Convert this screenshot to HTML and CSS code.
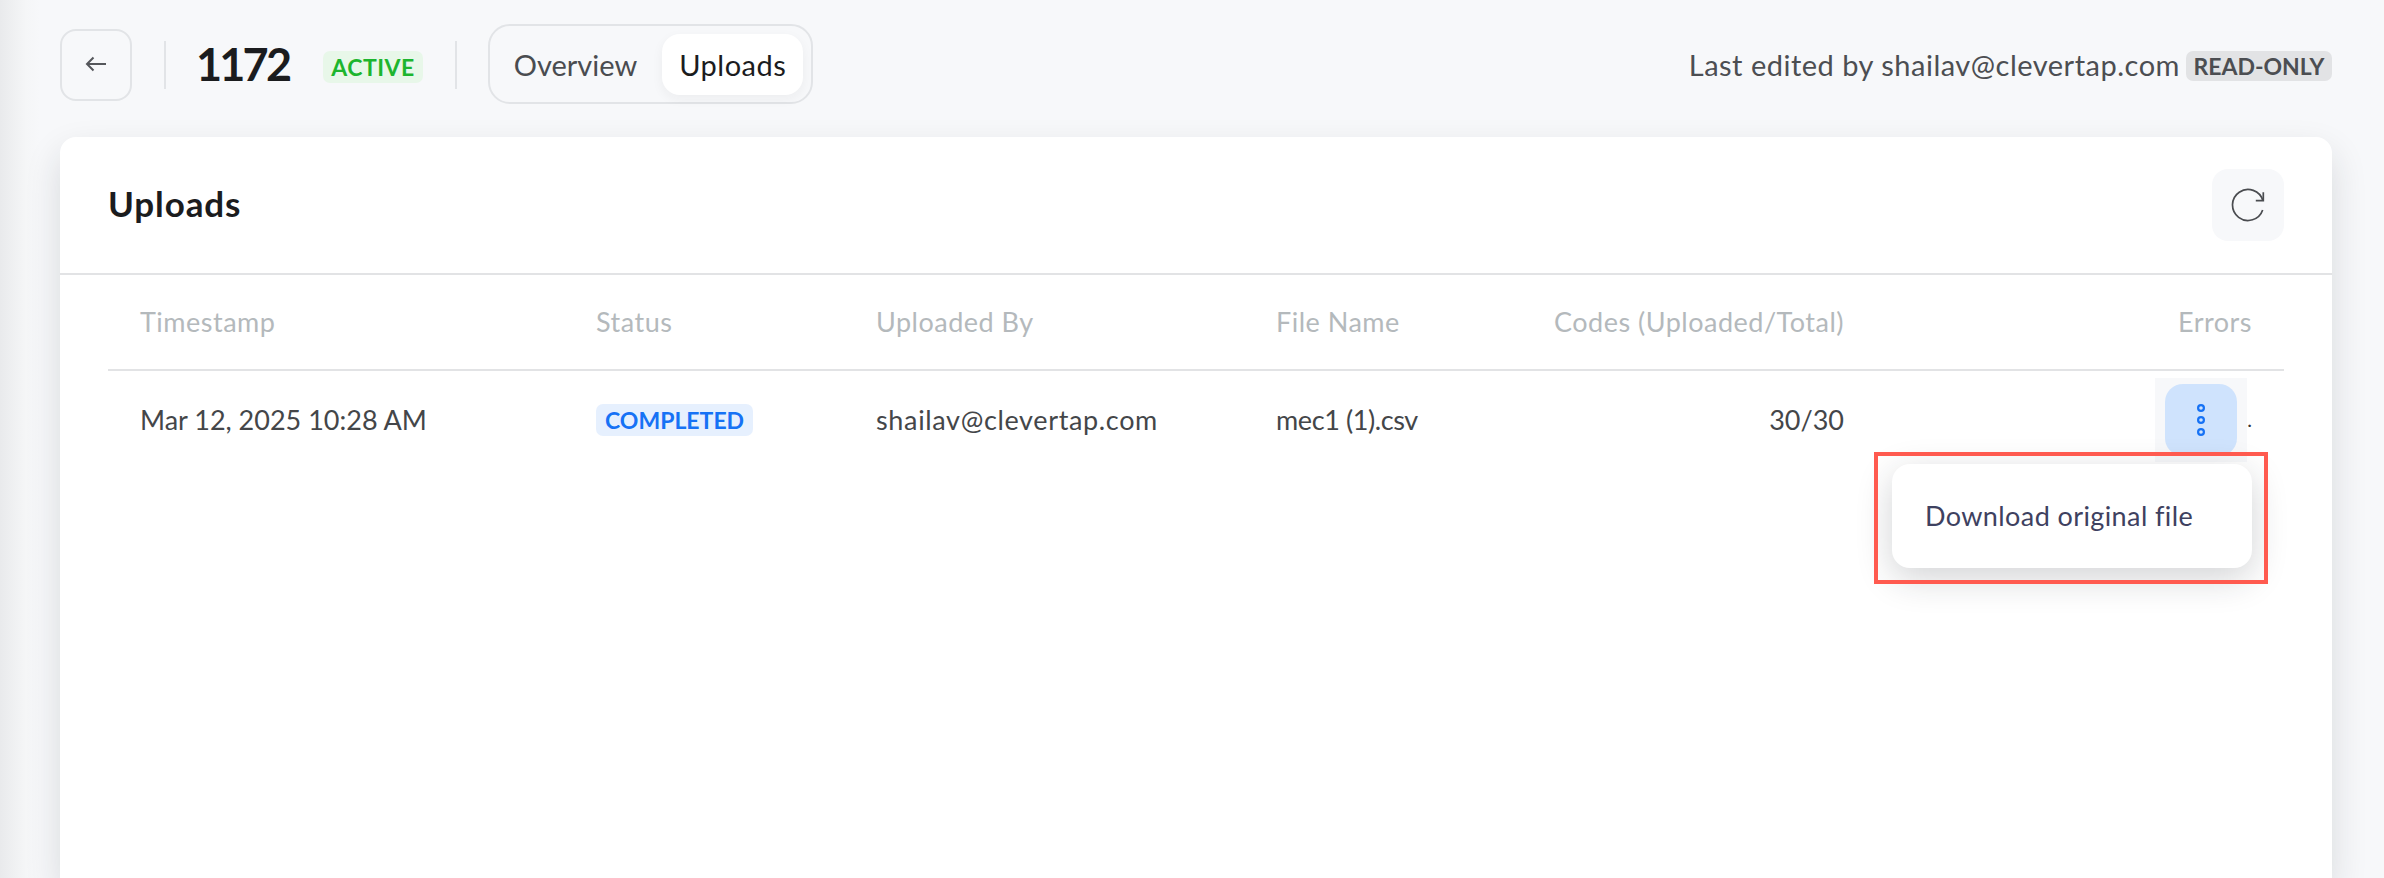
FILE: index.html
```html
<!DOCTYPE html>
<html lang="en">
<head>
<meta charset="utf-8">
<title>Uploads</title>
<link rel="stylesheet" href="styles.css">
</head>
<body>
<div class="page">
  <header class="topbar">
    <button class="back" aria-label="Back">
      <svg width="24" height="24" viewBox="0 0 24 24" fill="none" stroke="#55575b" stroke-width="2"><path d="M22 11H3M9.500 4.500 3 11l6.500 6.500"/></svg>
    </button>
    <span class="divider first"></span>
    <h1 class="code-id">1172</h1>
    <span class="badge active">ACTIVE</span>
    <span class="divider second"></span>
    <nav class="tabs">
      <a class="tab">Overview</a>
      <a class="tab on">Uploads</a>
    </nav>
    <div class="edited">
      <span>Last edited by shailav@clevertap.com</span>
      <span class="badge readonly">READ-ONLY</span>
    </div>
  </header>
  <main class="card">
    <div class="card-head">
      <h2>Uploads</h2>
      <button class="refresh" aria-label="Refresh">
        <svg width="36" height="36" viewBox="0 0 36 36" fill="none" stroke="#4a4c50" stroke-width="1.700"><path d="M32.900 13.700A15.500 15.500 0 1 0 32.670 23"/><path d="M33.300 5.300v8.400h-7.500"/></svg>
      </button>
    </div>
    <div class="table">
      <div class="row head">
        <span>Timestamp</span>
        <span>Status</span>
        <span>Uploaded By</span>
        <span>File Name</span>
        <span class="right">Codes (Uploaded/Total)</span>
        <span class="right">Errors</span>
      </div>
      <div class="row body">
        <span>Mar 12, 2025 10:28 AM</span>
        <span><span class="badge done">COMPLETED</span></span>
        <span class="mail">shailav@clevertap.com</span>
        <span class="file">mec1 (1).csv</span>
        <span class="right">30/30</span>
        <span class="actions">
          <span class="more-wrap">
            <button class="more" aria-label="More">
              <svg width="12" height="36" viewBox="0 0 12 36" fill="none" stroke="#1672f5" stroke-width="2.200"><circle cx="6" cy="6" r="2.900"/><circle cx="6" cy="18" r="2.900"/><circle cx="6" cy="30" r="2.900"/></svg>
            </button>
          </span>
          <span class="dot">.</span>
          <div class="menu">Download original file</div>
          <div class="highlight"></div>
        </span>
      </div>
    </div>
  </main>
</div>
</body>
</html>
```
FILE: styles.css
```css
* { box-sizing: border-box; }
html, body { margin: 0; height: 100%; }
body {
  background: #f7f8fa;
  font-family: "Lato", "Liberation Sans", sans-serif;
  color: #444649;
  overflow: hidden;
}
.page {
  height: 878px;
  padding: 0 52px 0 60px;
  background: linear-gradient(90deg, #e9eaec 0, #f5f6f7 26px, #f7f8fa 40px);
}
.topbar {
  height: 137px;
  display: flex;
  align-items: center;
  padding-bottom: 9px;
}
button { border: 0; padding: 0; font: inherit; display: flex; align-items: center; justify-content: center; }
.back {
  width: 72px; height: 72px;
  margin-top: 2px;
  background: transparent;
  border: 2px solid #e2e4e7;
  border-radius: 16px;
}
.divider { width: 2px; height: 48px; margin-top: 2px; background: #e2e4e7; }
.divider.first { margin-left: 32px; margin-right: 30px; }
.divider.second { margin-left: 32px; margin-right: 31px; }
.code-id {
  margin: 0 34px 0 0;
  font-size: 45px;
  font-weight: 700;
  letter-spacing: -2.800px;
  color: #1b1c1e;
}
.badge {
  display: inline-flex;
  align-items: center;
  font-weight: 700;
  border-radius: 7px;
}
.active {
  height: 32px; padding: 0 8px; margin-top: 6px;
  font-size: 23px;
  letter-spacing: .500px;
  color: #1db52e;
  background: #e8f7e9;
}
.tabs {
  display: flex;
  align-items: center;
  height: 80px;
  padding: 0 8px 0 24px;
  gap: 25px;
  border: 2px solid #e2e4e7;
  border-radius: 22px;
}
.tab { font-size: 29px; color: #4a4c50; }
.tab.on {
  height: 61px;
  padding: 0 17px;
  display: flex;
  align-items: center;
  background: #fff;
  border-radius: 18px;
  color: #1b1c1e;
  letter-spacing: .500px;
  box-shadow: 0 4px 12px rgba(30, 35, 45, .05);
}
.edited {
  margin-left: auto;
  display: flex;
  align-items: center;
  gap: 6px;
  font-size: 29px;
  letter-spacing: .500px;
  color: #4c4e52;
}
.readonly {
  height: 30px; padding: 0 7.500px; margin-top: 4px;
  font-size: 23px;
  letter-spacing: 0;
  color: #4c4e52;
  background: #e2e3e5;
}
.card {
  height: 741px;
  background: #fff;
  border-radius: 16px 16px 0 0;
  box-shadow: 0 16px 36px rgba(30, 35, 45, .14);
}
.card-head {
  height: 138px;
  display: flex;
  align-items: center;
  justify-content: space-between;
  padding: 0 48px;
  border-bottom: 2px solid #e2e3e5;
}
.card-head h2 {
  margin: 0 0 5px;
  font-size: 35px;
  font-weight: 700;
  letter-spacing: .900px;
  color: #1b1c1e;
}
.refresh {
  width: 72px; height: 72px;
  margin-top: -1px;
  background: #f7f8fa;
  border-radius: 16px;
}
.table { padding: 0 48px; }
.row {
  display: grid;
  grid-template-columns: 456px 280px 400px 277px 1fr 408px;
  align-items: center;
  padding: 0 32px;
  font-size: 27px;
}
.row.head {
  height: 96px;
  padding-bottom: 2px;
  letter-spacing: .500px;
  color: #b4b9bc;
  border-bottom: 2px solid #e2e3e5;
}
.row.body { height: 100px; padding-bottom: 4px; color: #444649; }
.mail { letter-spacing: .650px; }
.file { letter-spacing: -.400px; }
.right { text-align: right; }
.done {
  height: 32px; padding: 0 9px;
  font-size: 23px;
  color: #1672f5;
  background: #e6f0fe;
}
.actions {
  position: relative;
  display: flex;
  justify-content: flex-end;
  align-items: center;
  height: 100%;
}
.more-wrap {
  padding: 6px 10px;
  background: #f7f8fa;
  margin-top: 2px;
}
.more {
  width: 72px; height: 72px;
  background: #cfe3fd;
  border-radius: 18px;
}
.dot { font-size: 20px; color: #333; }
.menu {
  position: absolute;
  top: 93px;
  right: 0;
  width: 360px;
  height: 104px;
  display: flex;
  align-items: center;
  padding: 0 0 2px 33px;
  font-size: 27px;
  letter-spacing: .400px;
  color: #3e4160;
  background: #fff;
  border-radius: 18px;
  box-shadow: 0 10px 36px rgba(30, 35, 45, .2);
}
.highlight {
  position: absolute;
  top: 81px;
  right: -16px;
  width: 394px;
  height: 132px;
  border: 4px solid #ff5a4f;
}
```
